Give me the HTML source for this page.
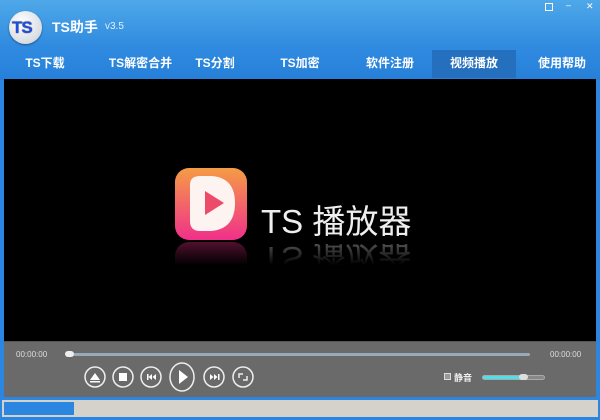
<!DOCTYPE html>
<html><head><meta charset="utf-8"><style>
*{margin:0;padding:0;box-sizing:border-box}
body{width:600px;height:420px;overflow:hidden;background:#2a86de;font-family:"Liberation Sans","Noto Sans CJK SC",sans-serif;position:relative}
.top{position:absolute;left:0;top:0;width:600px;height:80px;background:linear-gradient(#4fa8e8,#2f8ae0 60%,#2680d9)}
.logo{position:absolute;left:9px;top:11px;width:33px;height:33px;border-radius:50%;background:radial-gradient(circle at 40% 35%,#fff,#d8dde3 70%,#aab);box-shadow:0 1px 2px rgba(0,0,0,.4)}
.logo span{position:absolute;left:3px;top:7px;font:bold 17px "Liberation Sans";color:#1f4fd8;letter-spacing:-1px;text-shadow:0 0 1px #113}
.title{position:absolute;left:52px;top:17px;color:#fff;font-weight:bold;font-size:14px}
.ver{position:absolute;left:105px;top:21px;color:#e4f0fb;font-size:10px}
.tab{position:absolute;top:50px;height:28px;line-height:26px;color:#fff;font-weight:bold;font-size:12px;text-align:center}
.act{background:#2470bf}
.wb{position:absolute;top:3px;color:#fff;font-size:9px}
.video{position:absolute;left:4px;top:79px;width:592px;height:262px;background:#000}
.ctrl{position:absolute;left:4px;top:341px;width:592px;height:56px;background:#6a6a6a;border-top:1px solid #555}
.t{position:absolute;top:8px;color:#ddd;font-size:8px}
.bar{position:absolute;left:64px;top:11px;width:462px;height:3px;background:#9ab;border-radius:2px}
.knob{position:absolute;left:61px;top:9px;width:9px;height:6px;background:#eee;border-radius:3px}
.status{position:absolute;left:2px;top:400px;width:596px;height:17px;background:#d5d1cb}
</style></head><body>
<div class="top"></div>
<div class="logo"><span>TS</span></div>
<div class="title">TS助手</div><div class="ver">v3.5</div>
<div class="wb" style="left:545px;border:1px solid #fff;width:8px;height:8px"></div>
<div class="wb" style="left:566px;top:0">–</div>
<div class="wb" style="left:586px;top:1px">✕</div>
<div class="tab" style="left:20px;width:50px">TS下载</div>
<div class="tab" style="left:108px;width:65px">TS解密合并</div>
<div class="tab" style="left:190px;width:50px">TS分割</div>
<div class="tab" style="left:275px;width:50px">TS加密</div>
<div class="tab" style="left:362px;width:56px">软件注册</div>
<div class="tab act" style="left:432px;width:84px">视频播放</div>
<div class="tab" style="left:534px;width:56px">使用帮助</div>
<div class="video">
<svg width="592" height="262" style="position:absolute;left:0;top:0">
<defs><linearGradient id="g" x1="0" y1="0" x2="0" y2="1"><stop offset="0" stop-color="#f59c45"/><stop offset="1" stop-color="#f0308a"/></linearGradient>
<linearGradient id="fade" x1="0" y1="0" x2="0" y2="1"><stop offset="0" stop-color="#fff" stop-opacity=".35"/><stop offset=".6" stop-color="#fff" stop-opacity="0"/></linearGradient>
<mask id="m"><rect x="0" y="162" width="592" height="40" fill="url(#fade)"/></mask></defs>
<rect x="171" y="89" width="72" height="72" rx="14" fill="url(#g)"/>
<path d="M186 106 Q186 97 196 97 L208 97 Q231 99 231 124 Q231 150 207 152 L196 152 Q186 152 186 142 Z" fill="#fdf3f1"/>
<path d="M201 112 L201 136 L220 124 Z" fill="#ee4a6a"/>
<g mask="url(#m)">
<rect x="171" y="163" width="72" height="72" rx="14" fill="#f0308a"/>
<text x="257" y="-168" fill="#fff" font-size="33" transform="scale(1,-1)" font-family="Liberation Sans,Noto Sans CJK SC,sans-serif">TS 播放器</text>
</g>
<text x="257" y="154" fill="#eee" font-size="33" font-family="Liberation Sans,Noto Sans CJK SC,sans-serif">TS 播放器</text>
</svg></div>
<div class="ctrl">
<div class="t" style="left:12px">00:00:00</div><div class="t" style="left:546px">00:00:00</div>
<div class="bar"></div><div class="knob"></div>
<svg width="592" height="56" style="position:absolute;left:0;top:0" fill="#fff" stroke="#eee">
<g fill="none" stroke-width="1.5">
<circle cx="91" cy="35" r="10"/><circle cx="119" cy="35" r="10"/><circle cx="147" cy="35" r="10"/>
<ellipse cx="178" cy="35" rx="12" ry="14"/><circle cx="210" cy="35" r="10"/><circle cx="239" cy="35" r="10"/>
<path d="M235 36v-4h4M243 34v4h-4"/></g>
<g stroke="none"><path d="M86 38h10l-5-7z"/><rect x="86" y="39" width="10" height="1.5"/>
<rect x="115" y="31" width="8" height="8"/>
<rect x="143" y="32" width="1.5" height="6"/><path d="M148 32v6l-3.5-3zM152 32v6l-3.5-3z"/>
<path d="M175 28v14l9-7z"/>
<path d="M206 32v6l3.5-3zM210 32v6l3.5-3z"/><rect x="214" y="32" width="1.5" height="6"/></g>
</svg>
<div style="position:absolute;left:440px;top:31px;width:7px;height:7px;border:1px solid #ddd;background:#999"></div>
<div style="position:absolute;left:450px;top:29px;color:#eee;font-size:9px;font-weight:bold">静音</div>
<div style="position:absolute;left:478px;top:33px;width:63px;height:5px;background:#888;border:1px solid #aaa;border-radius:3px"></div>
<div style="position:absolute;left:479px;top:34px;width:42px;height:3px;background:#4de0e8"></div>
<div style="position:absolute;left:515px;top:32px;width:9px;height:6px;background:#ddd;border-radius:3px"></div>
</div>
<div class="status"><div style="position:absolute;left:2px;top:2px;width:70px;height:13px;background:#2a86de"></div></div>
</body></html>
